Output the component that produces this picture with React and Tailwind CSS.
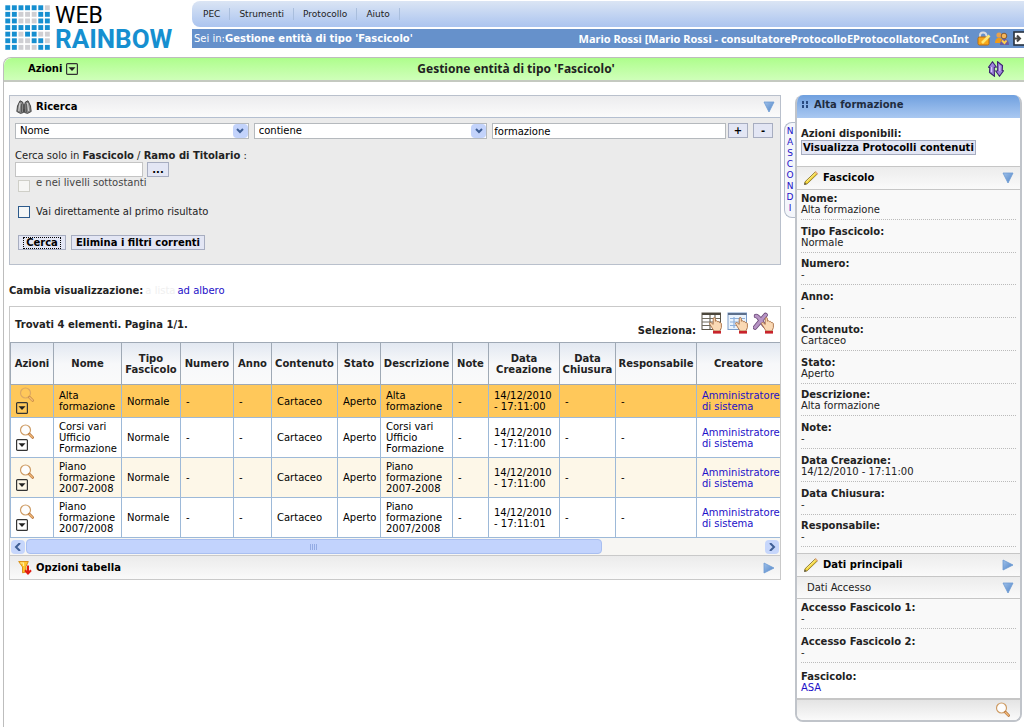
import React, { useState } from "react";

const LOGO_ROWS = ["BBBBBBg", "BBgggBB", "BBgggBB", "BBBBBBB", "BBgBBgg", "BBggBBg", "BBgggBB"];

const COLUMNS = [
  { label: "Azioni", width: "w-[43px]" },
  { label: "Nome", width: "w-[68px]" },
  { label: "Tipo Fascicolo", width: "w-[59px]" },
  { label: "Numero", width: "w-[53px]" },
  { label: "Anno", width: "w-[38px]" },
  { label: "Contenuto", width: "w-[66px]" },
  { label: "Stato", width: "w-[43px]" },
  { label: "Descrizione", width: "w-[72px]" },
  { label: "Note", width: "w-[36px]" },
  { label: "Data Creazione", width: "w-[71px]" },
  { label: "Data Chiusura", width: "w-[56px]" },
  { label: "Responsabile", width: "w-[81px]" },
  { label: "Creatore", width: "" },
];

const ROWS = [
  { name: "Alta formazione", date: "14/12/2010 - 17:11:00", color: "bg-[#ffc85a]", height: "h-[33px]" },
  { name: "Corsi vari Ufficio Formazione", date: "14/12/2010 - 17:11:00", color: "bg-white", height: "h-10" },
  { name: "Piano formazione 2007-2008", date: "14/12/2010 - 17:11:00", color: "bg-[#fdf7e8]", height: "h-10" },
  { name: "Piano formazione 2007/2008", date: "14/12/2010 - 17:11:01", color: "bg-white", height: "h-10" },
];

const DETAILS = [
  ["Nome:", "Alta formazione"],
  ["Tipo Fascicolo:", "Normale"],
  ["Numero:", "-"],
  ["Anno:", "-"],
  ["Contenuto:", "Cartaceo"],
  ["Stato:", "Aperto"],
  ["Descrizione:", "Alta formazione"],
  ["Note:", "-"],
  ["Data Creazione:", "14/12/2010 - 17:11:00"],
  ["Data Chiusura:", "-"],
  ["Responsabile:", "-"],
];

const ACCESS = [
  ["Accesso Fascicolo 1:", "-"],
  ["Accesso Fascicolo 2:", "-"],
];

const LogoMark = () => (
  <svg width="46" height="46" viewBox="0 0 46 46" className="shrink-0">
    {LOGO_ROWS.map((row, y) =>
      row.split("").map((c, x) => (
        <rect
          key={`${x}-${y}`}
          x={x * 6.6 + 0.3}
          y={y * 6.6 + 0.3}
          width="4.9"
          height="4.9"
          fill={c === "B" ? "#168fd0" : "#cfcfd3"}
        />
      ))
    )}
  </svg>
);

const Triangle = ({ right }) => (
  <svg width="12" height="12" viewBox="0 0 12 12">
    <defs>
      <linearGradient id="tri" x1="0" y1="0" x2="1" y2="1">
        <stop offset="0" stopColor="#9fc1ea" />
        <stop offset="1" stopColor="#4f83c6" />
      </linearGradient>
    </defs>
    <path d={right ? "M1 1 11 6 1 11z" : "M1 1h10L6 11z"} fill="url(#tri)" stroke="#6c9bd3" strokeWidth="0.8" />
  </svg>
);

const MenuBox = () => (
  <svg width="12" height="12" viewBox="0 0 12 12">
    <rect x="0.6" y="0.6" width="10.8" height="10.8" rx="1" fill="none" stroke="#333" strokeWidth="1.2" />
    <path d="M2.5 4.2h7L6 8z" fill="#222" />
  </svg>
);

const Magnifier = ({ faded }) => (
  <svg width="16" height="16" viewBox="0 0 16 16" opacity={faded ? 0.7 : 1}>
    <circle cx="6.5" cy="6" r="5" fill={faded ? "none" : "#fdfdfd"} stroke="#cf9d66" strokeWidth="1.2" />
    <path d="M10.5 10.2 13.600 13.400" stroke="#b87840" strokeWidth="2.800" strokeLinecap="round" />
    <path d="M10.600 10.400 13.4 13.2" stroke="#f0b878" strokeWidth="1.4" strokeLinecap="round" />
  </svg>
);

const Binoculars = () => (
  <svg width="16" height="14" viewBox="0 0 16 14">
    <path d="M4 .8 6.600 2 7.500 5v7.500L4.500 13.400.8 11.500 1.500 6z" fill="#858585" stroke="#3c3c3c" strokeWidth="0.9" />
    <path d="M12 .8 9.400 2 8.500 5v7.500l3 .9 3.700-1.900L14.500 6z" fill="#858585" stroke="#3c3c3c" strokeWidth="0.9" />
    <path d="M7 5h2v4H7z" fill="#555" />
    <path d="M4 3 2.800 11M11.500 3l1.200 8" stroke="#cfcfcf" strokeWidth="1.2" />
    <path d="M5.500 4v8M10.300 4v8" stroke="#4c4c4c" strokeWidth="0.800" />
  </svg>
);

const Pencil = () => (
  <svg width="16" height="16" viewBox="0 0 16 16">
    <path d="M1.500 14.500 2 11.800 12.400 1.8 14.5 3.8 4.200 13.8z" fill="#f1d236" stroke="#806b1c" strokeWidth="0.8" />
    <path d="M3.5 11.7 12.6 2.9" stroke="#fff3a0" strokeWidth="1" />
    <path d="M12.2 1.6 14.5 3.9" stroke="#e8b08a" strokeWidth="1.400" />
    <path d="M1.200 14.800 1.800 12.4 3.6 14.200z" fill="#555" />
  </svg>
);

const Funnel = () => (
  <svg width="14" height="15" viewBox="0 0 14 15">
    <path d="M.7 1.5h9.6L8 6.5V12l-3.5.8V7z" fill="#ffc52e" stroke="#d78a10" strokeWidth="0.9" />
    <path d="M2.5 3h3v3" stroke="#fff0a0" strokeWidth="1.2" fill="none" />
    <path d="M10 5.5V13M7 10.3l3 3.2 3-3.2" stroke="#e01b12" strokeWidth="2" fill="none" />
  </svg>
);

const Hand = () => (
  <g>
    <path
      d="M9 12.500c-1.200-1.500.2-2.700 1.600-1.500l1.600 1.400V6.800c0-1.700 2.200-1.700 2.200 0v2.400c.8-.9 2-.4 2.100.5.8-.5 1.900 0 1.900.9.9-.3 2 .3 2 1.400v3.500L19 19h-6z"
      fill="#fad9b5"
      stroke="#a96f45"
      strokeWidth="0.9"
    />
    <path d="M12 19h8v2.6h-8z" fill="#c8232b" />
  </g>
);

const GridHand = ({ blue }) => (
  <svg width="22" height="22" viewBox="0 0 22 22">
    <rect x="1" y="1" width="18.5" height="16.500" fill={blue ? "#eaf3fd" : "#fff"} stroke={blue ? "#7b9cc9" : "#5b5548"} />
    <path d="M1 2h18.500" stroke={blue ? "#5c6f8c" : "#4c473c"} strokeWidth="2" />
    <path
      d={blue ? "M3 6.500h15M3 10h15M3 13.500h15M7 5v11M13 5v11" : "M1 6.500h18M1 10h18M1 13.500h18M9 3v14M14 3v14"}
      stroke={blue ? "#8db0dc" : "#6f6a5e"}
      strokeWidth="1.200"
    />
    <Hand />
  </svg>
);

const CrossHand = () => (
  <svg width="22" height="22" viewBox="0 0 22 22">
    <path d="M2 15.5C6 11 9 7 12.5 3M3 4c3 0 4 5 9 10" stroke="#6b4a78" strokeWidth="4.6" strokeLinecap="round" fill="none" />
    <path d="M2 15.5C6 11 9 7 12.5 3M3 4c3 0 4 5 9 10" stroke="#b794c4" strokeWidth="3" strokeLinecap="round" fill="none" />
    <Hand />
  </svg>
);

const Lock = () => (
  <svg width="14" height="15" viewBox="0 0 14 15">
    <path d="M3 7V4.5C3 .5 9 .5 9.5 4.5V7" fill="none" stroke="#d9dbe0" strokeWidth="2" />
    <rect x="1" y="6" width="11" height="8" rx="1.5" fill="#f7a81b" stroke="#b86b10" />
    <path d="M5 12 12.5 4.5" stroke="#ffe873" strokeWidth="2.6" />
  </svg>
);

const Users = () => (
  <svg width="14" height="15" viewBox="0 0 14 15">
    <circle cx="4" cy="4" r="2.6" fill="#e8a14d" />
    <circle cx="9" cy="5" r="2.8" fill="#f3b65c" stroke="#7b4516" strokeWidth="0.8" />
    <path d="M0 12c0-7 8-7 8 0z" fill="#f09a17" />
    <path d="M5 14c0-8 9-8 9 0z" fill="#6d5ca0" />
    <path d="M7 9.5 9.5 12l2-2.5" stroke="#ffd04a" strokeWidth="2" fill="none" />
  </svg>
);

const Exit = () => (
  <svg width="11" height="15" viewBox="0 0 11 15">
    <rect x="1" y="1" width="12" height="13" fill="#fff" stroke="#26313f" strokeWidth="1.6" />
    <path d="M0 7.5h6M4 4.5l3 3-3 3" stroke="#444" strokeWidth="2" fill="none" />
  </svg>
);

const Refresh = () => (
  <svg width="16" height="16" viewBox="0 0 16 16">
    <path d="M6.500 15.200 1.500 11.500 1.800 6.500.5 6.300 4.500.8 8.300 6l-2 .3v4.200z" fill="#9d82dc" stroke="#3c2370" strokeWidth="1.100" />
    <path d="M9.500.8l5 3.700-.3 5 1.300.2-4 5.500L7.700 10l2-.3V5.500z" fill="#9d82dc" stroke="#3c2370" strokeWidth="1.100" />
    <path d="M3.500 6v5M11.800 4.500v5.500" stroke="#d6c8f7" strokeWidth="1.200" />
  </svg>
);

const Chevron = ({ d }) => (
  <svg width="8" height="8" viewBox="0 0 8 8">
    <path d={d} fill="none" stroke="#3f5f96" strokeWidth="2" />
  </svg>
);

const SmallButton = ({ className = "", children, ...props }) => (
  <button
    type="button"
    className={`flex h-[15px] items-center justify-center border border-[#a7adc0] bg-[#e3e6f4] font-bold leading-none text-black ${className}`}
    {...props}
  >
    {children}
  </button>
);

const FilterSelect = ({ label, options }) => (
  <div className="relative flex-1">
    <select
      aria-label={label}
      className="block h-4 w-full appearance-none border border-[#b5b9bd] bg-white pl-1 leading-none text-black"
    >
      {options.map((option) => (
        <option key={option}>{option}</option>
      ))}
    </select>
    <span className="pointer-events-none absolute top-px right-px flex h-[14px] w-[15px] items-center justify-center rounded-sm bg-[#c3d3fb]">
      <Chevron d="M1 2l3 3 3-3" />
    </span>
  </div>
);

const FieldList = ({ fields, className }) => (
  <dl className={`grid auto-rows-fr px-1 pt-[3px] ${className}`}>
    {fields.map(([label, value]) => (
      <div key={label} className="leading-[11px]">
        <div className="h-[27px] border-b border-dotted border-[#bbb]">
          <dt className="font-bold">{label}</dt>
          <dd>{value}</dd>
        </div>
      </div>
    ))}
  </dl>
);

const TopBar = () => (
  <header className="flex h-[57px]">
    <div className="flex w-48 shrink-0 gap-1 pt-[5px] pl-[5px] font-[Roboto,sans-serif]">
      <LogoMark />
      <div className="text-black">
        <div className="text-[23px] leading-[22px]">WEB</div>
        <div className="text-[26px] leading-6 font-bold text-[#168fd0]">RAINBOW</div>
      </div>
    </div>
    <div className="min-w-0 flex-1 pt-px">
      <nav className="flex h-[26px] items-center rounded-l-lg bg-gradient-to-b from-[#dbe5f4] to-[#abc4ef] text-[9px]">
        {["PEC", "Strumenti", "Protocollo", "Aiuto"].map((item) => (
          <a key={item} href="#" className="border-r border-[#a9bedd] px-[9px] leading-3 first:pl-[11px]">
            {item}
          </a>
        ))}
      </nav>
      <div className="mt-[2px] flex h-[19px] items-center bg-[#6691cb] pl-[2px] text-white">
        <span>Sei in:</span>
        <span className="font-bold">Gestione entità di tipo 'Fascicolo'</span>
        <span className="ml-auto overflow-hidden whitespace-nowrap font-['Noto_Sans',sans-serif] text-[11px] font-bold">
          Mario Rossi [Mario Rossi - consultatoreProtocolloEProtocollatoreConInt
        </span>
        <span className="ml-2 flex shrink-0 gap-1">
          <button type="button" aria-label="Password"><Lock /></button>
          <button type="button" aria-label="Utenti"><Users /></button>
          <button type="button" aria-label="Esci"><Exit /></button>
        </span>
      </div>
    </div>
  </header>
);

const SearchPanel = () => {
  const [text, setText] = useState("formazione");

  return (
    <section className="border border-[#b9c0cc] bg-[#ebebeb]">
      <div className="flex h-[22px] items-center border-b border-[#b4bfd0] bg-gradient-to-b from-[#ececee] to-[#fbfbfb] pr-[5px] pl-[6px]">
        <Binoculars />
        <h2 className="ml-1 flex-1 font-bold text-black">Ricerca</h2>
        <button type="button" aria-label="Chiudi ricerca"><Triangle /></button>
      </div>
      <form className="px-[5px] pt-[5px] pb-[14px]" onSubmit={(e) => e.preventDefault()}>
        <div className="flex gap-[5px]">
          <FilterSelect label="Campo" options={["Nome", "Numero", "Anno"]} />
          <FilterSelect label="Operatore" options={["contiene", "uguale a"]} />
          <div className="flex flex-1">
            <input
              aria-label="Valore"
              value={text}
              onChange={(e) => setText(e.target.value)}
              className="h-4 w-full border border-[#b5b9bd] bg-white pl-px text-black"
            />
          </div>
          <div className="-ml-[3px] flex gap-[5px] pr-[2px]">
            <SmallButton className="w-5">+</SmallButton>
            <SmallButton className="w-5">-</SmallButton>
          </div>
        </div>
        <label htmlFor="ramo" className="mt-[11px] block leading-3">
          Cerca solo in <b>Fascicolo</b> / <b>Ramo di Titolario</b> :
        </label>
        <div className="flex gap-1">
          <input id="ramo" className="h-[15px] w-[128px] border border-[#c4c4c4] bg-white" />
          <SmallButton className="w-[22px]" aria-label="Scegli">...</SmallButton>
        </div>
        <label className="flex h-4 gap-[6px] pl-[3px] leading-3 text-[#444]">
          <input type="checkbox" disabled className="mt-[3px] size-3 appearance-none border border-[#cfcfc8] bg-[#f6f6f4]" />
          e nei livelli sottostanti
        </label>
        <label className="mt-[13px] flex h-3 items-center gap-[6px] pl-[3px]">
          <input type="checkbox" className="size-3 appearance-none border border-[#2c5a8c] bg-[#f4f6f6] checked:bg-[#2c5a8c]" />
          Vai direttamente al primo risultato
        </label>
        <div className="mt-[17px] flex gap-[5px] pl-[3px]">
          <SmallButton className="w-12 p-px">
            <span className="border border-dotted border-black px-[2px]">Cerca</span>
          </SmallButton>
          <SmallButton className="px-1">Elimina i filtri correnti</SmallButton>
        </div>
      </form>
    </section>
  );
};

const ResultsTable = () => (
  <table className="w-full table-fixed border-collapse text-black">
    <thead>
      <tr className="h-[42px] bg-gradient-to-b from-[#e2e8f1] via-[#f7f8fa] to-[#fafafa] text-[#222]">
        {COLUMNS.map((col) => (
          <th key={col.label} className={`border border-[#9fa9b5] leading-[11px] font-bold last:border-r-0 ${col.width}`}>
            {col.label}
          </th>
        ))}
      </tr>
    </thead>
    <tbody className="leading-[11px]">
      {ROWS.map((row) => (
        <tr
          key={row.name}
          className={`${row.color} ${row.height} [&>td]:border [&>td]:border-[#9db9d8] [&>td]:px-[5px] [&>td]:py-0 [&>td:last-child]:border-r-0 [&>td:last-child]:pr-0`}
        >
          <td>
            <div className="flex h-7 flex-col">
              <button type="button" aria-label={`Apri ${row.name}`} className="ml-[3px] h-[15px] w-4">
                <Magnifier faded={row.color === "bg-[#ffc85a]"} />
              </button>
              <button type="button" aria-label={`Azioni ${row.name}`} className="h-3 w-3">
                <MenuBox />
              </button>
            </div>
          </td>
          <td>{row.name}</td>
          <td>Normale</td>
          <td>-</td>
          <td>-</td>
          <td>Cartaceo</td>
          <td>Aperto</td>
          <td>{row.name}</td>
          <td>-</td>
          <td>{row.date}</td>
          <td>-</td>
          <td>-</td>
          <td>
            <a href="#" className="text-[#1c10c8]">Amministratore di sistema</a>
          </td>
        </tr>
      ))}
    </tbody>
  </table>
);

const ScrollStrip = () => (
  <div className="flex h-[17px] items-center gap-px bg-[#f7f6f3] px-px">
    <button type="button" aria-label="Scorri a sinistra" className="flex h-[14px] w-[14px] items-center justify-center rounded-sm bg-[#c6d6fb]">
      <Chevron d="M6 0 2 4l4 4" />
    </button>
    <div className="flex h-full flex-1">
      <div className="my-px flex w-[78%] items-center justify-center gap-px rounded-sm border border-[#a9bff0] bg-[#c2d3fd]">
        {[0, 1, 2, 3].map((i) => (
          <span key={i} className="h-[6px] w-px bg-[#93abe4]" />
        ))}
      </div>
    </div>
    <button type="button" aria-label="Scorri a destra" className="flex h-[14px] w-[14px] items-center justify-center rounded-sm bg-[#c6d6fb]">
      <Chevron d="M2 0l4 4-4 4" />
    </button>
  </div>
);

const Results = () => (
  <section>
    <div className="border border-[#c9c9c9]">
      <div className="flex h-[35px] px-[5px]">
        <p className="flex-1 pt-3 leading-3 font-bold">Trovati 4 elementi. Pagina 1/1.</p>
        <span className="self-end pb-[5px] leading-3 font-bold">Seleziona:</span>
        <span className="ml-[5px] flex gap-1 pt-[5px]">
          <button type="button" aria-label="Seleziona tutti" className="h-[22px]"><GridHand /></button>
          <button type="button" aria-label="Seleziona pagina" className="h-[22px]"><GridHand blue /></button>
          <button type="button" aria-label="Deseleziona" className="h-[22px]"><CrossHand /></button>
        </span>
      </div>
      <ResultsTable />
      <ScrollStrip />
    </div>
    <div className="flex h-6 items-center border border-t-0 border-[#c9c9c9] bg-gradient-to-b from-[#ebebeb] to-[#fafafa] pr-[5px] pl-2">
      <Funnel />
      <h2 className="ml-1 flex-1 font-bold text-black">Opzioni tabella</h2>
      <button type="button" aria-label="Apri opzioni"><Triangle right /></button>
    </div>
  </section>
);

const PanelHeading = ({ children, open, icon }) => (
  <div className="flex h-6 items-center border-y border-[#c6c6c6] bg-gradient-to-b from-[#ececec] to-[#fafafa] pr-[6px] pl-[6px]">
    {icon}
    <h3 className="ml-1 flex-1 font-bold text-black">{children}</h3>
    <button type="button" aria-label={`${children}`}><Triangle right={!open} /></button>
  </div>
);

const DetailPanel = () => (
  <aside className="w-[227px] shrink-0 self-start overflow-hidden rounded-lg border-2 border-t-0 border-[#c0c4ca] bg-[#f9f9f9]">
    <h2 className="flex h-[23px] items-center gap-1 bg-gradient-to-b from-[#70a0df] to-[#a9c8f1] px-1 pb-1 font-bold text-[#1f2c3f]">
      <svg width="9" height="8" viewBox="0 0 9 8" fill="#284a80">
        <path d="M1 0h2v3H1zM5 0h2v3H5zM1 4h2v3H1zM5 4h2v3H5z" />
      </svg>
      Alta formazione
    </h2>
    <div className="h-12 bg-white px-1 pt-[10px]">
      <p className="leading-3 font-bold">Azioni disponibili:</p>
      <SmallButton className="px-px">Visualizza Protocolli contenuti</SmallButton>
    </div>
    <PanelHeading open icon={<Pencil />}>Fascicolo</PanelHeading>
    <FieldList fields={DETAILS} className="h-[363px]" />
    <PanelHeading icon={<Pencil />}>Dati principali</PanelHeading>
    <div className="flex h-[22px] items-center border-b border-[#c6c6c6] bg-gradient-to-b from-[#ececec] to-[#fafafa] pr-[6px] pl-[10px]">
      <h3 className="flex-1">Dati Accesso</h3>
      <button type="button" aria-label="Dati Accesso"><Triangle /></button>
    </div>
    <FieldList fields={ACCESS} className="h-[71px]" />
    <div className="h-7 bg-white px-1 pt-px leading-[11px]">
      <p className="font-bold">Fascicolo:</p>
      <a href="#" className="text-[#1c10c8]">ASA</a>
    </div>
    <div className="flex h-[22px] items-center justify-end border-t-2 border-[#c6c6c6] bg-gradient-to-b from-[#e4e4e4] to-[#fafafa] pr-[9px]">
      <button type="button" aria-label="Apri dettaglio"><Magnifier /></button>
    </div>
  </aside>
);

export default function App() {
  return (
    <div className="flex min-h-screen flex-col overflow-hidden bg-white font-['DejaVu_Sans',sans-serif] text-[10px] leading-3 text-[#222]">
      <TopBar />
      <div className="ml-[3px] flex-1 rounded-tl-lg border-t border-l border-[#bdbdbd]">
        <div className="flex h-6 items-center rounded-tl-lg border-b-2 border-[#c4c9c0] bg-gradient-to-b from-[#aefd8c] to-[#cfffb9] pr-5 pl-6">
          <div className="flex flex-1 items-center gap-1 font-bold text-black">
            Azioni
            <button type="button" aria-label="Azioni"><MenuBox /></button>
          </div>
          <h1 className="font-['Noto_Sans',sans-serif] text-xs font-bold">Gestione entità di tipo 'Fascicolo'</h1>
          <div className="flex flex-1 justify-end">
            <button type="button" aria-label="Aggiorna"><Refresh /></button>
          </div>
        </div>
        <div className="flex pt-[13px] pr-[2px] pl-[5px]">
          <main className="min-w-0 flex-1">
            <SearchPanel />
            <p className="mt-5 mb-[9px] flex font-bold">
              Cambia visualizzazione:
              <span className="ml-[2px] font-normal text-[#f0f0f0]">a lista</span>
              <a href="#" className="ml-[2px] font-normal text-[#1c10c8]">ad albero</a>
            </p>
            <Results />
          </main>
          <button
            type="button"
            aria-label="Nascondi"
            className="mt-[27px] ml-[3px] flex h-24 w-[11px] shrink-0 flex-col items-center justify-center self-start rounded-l-lg border border-r-0 border-[#b3bccb] bg-[#f4f6fb] text-[9px] leading-[11px] text-[#1c10c8]"
          >
            {"NASCONDI".split("").map((letter, i) => (
              <span key={i}>{letter}</span>
            ))}
          </button>
          <DetailPanel />
        </div>
      </div>
    </div>
  );
}
